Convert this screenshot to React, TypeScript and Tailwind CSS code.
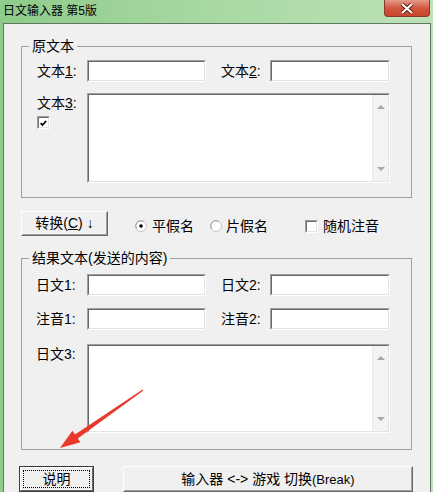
import type { ReactNode } from 'react';

function Sunken({ className = '', children }: { className?: string; children?: ReactNode }) {
  return (
    <div className={`border border-t-[#a0a0a0] border-l-[#a0a0a0] border-b-white border-r-white ${className}`}>
      <div className="flex h-full w-full border border-t-[#696969] border-l-[#696969] border-b-[#e3e3e3] border-r-[#e3e3e3] bg-white">
        {children}
      </div>
    </div>
  );
}

function TextArea({ className = '' }: { className?: string }) {
  return (
    <Sunken className={className}>
      <div className="flex-1" />
      <div className="flex w-[16px] flex-col items-center justify-between border-l border-l-[#e8e8e8] bg-[#f3f3f3] py-[9px]">
        <svg width="8" height="5" viewBox="0 0 8 5">
          <path d="M0 5 L4 1 L8 5 Z" fill="#a8a8a8" />
        </svg>
        <svg width="8" height="5" viewBox="0 0 8 5">
          <path d="M0 0 L8 0 L4 4 Z" fill="#a8a8a8" />
        </svg>
      </div>
    </Sunken>
  );
}

function CheckBox({ checked = false, className = '' }: { checked?: boolean; className?: string }) {
  return (
    <Sunken className={`h-[13px] w-[13px] ${className}`}>
      {checked && (
        <svg width="11" height="11" viewBox="0 0 11 11">
          <path d="M2 5 L4.3 7.5 L8.8 2.5" stroke="#000" strokeWidth="2" fill="none" />
        </svg>
      )}
    </Sunken>
  );
}

function Radio({ checked = false, className = '' }: { checked?: boolean; className?: string }) {
  return (
    <svg width="12" height="12" viewBox="0 0 12 12" className={className}>
      <circle cx="6" cy="6" r="5.5" fill="#fff" stroke="#c4c4c4" />
      <path d="M1.6 8.5 A5 5 0 0 1 8.5 1.6" stroke="#9a9a9a" fill="none" />
      {checked && <circle cx="6" cy="6" r="1.8" fill="#000" />}
    </svg>
  );
}

function Button({ className = '', children }: { className?: string; children: ReactNode }) {
  return (
    <div className={`border border-t-white border-l-white border-b-[#696969] border-r-[#696969] bg-[#f0f0f0] ${className}`}>
      <div className="flex h-full w-full items-center justify-center border border-t-[#f0f0f0] border-l-[#f0f0f0] border-b-[#a0a0a0] border-r-[#a0a0a0]">
        {children}
      </div>
    </div>
  );
}

function Label({ className = '', children }: { className?: string; children: ReactNode }) {
  return <span className={`shrink-0 text-[14px] leading-[20px] ${className}`}>{children}</span>;
}

export default function App() {
  return (
    <div className="relative flex h-[492px] w-[433px] flex-col overflow-hidden bg-gradient-to-r from-[#8fcb8b] via-[#a8d9a3] to-[#bde2b7] font-['Liberation_Sans','Noto_Sans_CJK_SC',sans-serif] text-black">
      {/* Title bar */}
      <div className="flex h-[23px] shrink-0 items-start">
        <span className="mt-[2px] pl-[3px] text-[12px] leading-[18px]">日文输入器 第5版</span>
        <div className="mr-[3px] ml-auto flex h-[17px] w-[46px] items-center justify-center rounded-b-[4px] border border-t-0 border-[#8a3a2c] bg-gradient-to-b from-[#e49a88] via-[#d0583e] to-[#c9452e]">
          <svg width="14" height="11" viewBox="0 0 14 11">
            <path d="M2 1 L12 10 M12 1 L2 10" stroke="#5a1c12" strokeWidth="4" />
            <path d="M2 1 L12 10 M12 1 L2 10" stroke="#fff" strokeWidth="2.2" />
          </svg>
        </div>
      </div>

      {/* Window body */}
      <div className="mr-[2px] ml-[3px] flex-1 border border-[#5e7a5e] bg-[#f0f0f0]">
        <fieldset className="mt-[12px] ml-[17px] w-[391px] border border-[#a0a0a0]">
          <legend className="ml-[7px] px-[3px] text-[14px] leading-[20px]">原文本</legend>
          <div className="pt-[4px] pb-[14px] pl-[15px]">
            <div className="flex h-[22px] items-center">
              <Label className="w-[50px]">
                文本<span className="underline">1</span>:
              </Label>
              <Sunken className="h-[22px] w-[119px]" />
              <Label className="ml-[15px] w-[49px]">
                文本<span className="underline">2</span>:
              </Label>
              <Sunken className="h-[22px] w-[120px]" />
            </div>
            <div className="mt-[11px] flex">
              <div className="flex w-[50px] flex-col">
                <Label>
                  文本<span className="underline">3</span>:
                </Label>
                <CheckBox checked className="mt-[3px]" />
              </div>
              <TextArea className="h-[90px] w-[303px]" />
            </div>
          </div>
        </fieldset>

        <div className="mt-[12px] ml-[17px] flex items-center">
          <Button className="h-[25px] w-[87px]">
            <span className="text-[14px] leading-[20px]">
              转换(<span className="underline">C</span>) ↓
            </span>
          </Button>
          <div className="flex items-center pt-[6px]">
            <Radio checked className="ml-[27px]" />
            <Label className="ml-[5px]">平假名</Label>
            <Radio className="ml-[16px]" />
            <Label className="ml-[4px]">片假名</Label>
            <CheckBox className="ml-[37px]" />
            <Label className="ml-[5px]">随机注音</Label>
          </div>
        </div>

        <fieldset className="mt-[12px] ml-[17px] w-[391px] border border-[#a0a0a0]">
          <legend className="ml-[7px] px-[3px] text-[14px] leading-[20px]">结果文本(发送的内容)</legend>
          <div className="pt-[6px] pb-[16px] pl-[14px]">
            <div className="flex h-[22px] items-center">
              <Label className="w-[51px]">日文1:</Label>
              <Sunken className="h-[22px] w-[119px]" />
              <Label className="ml-[15px] w-[49px]">日文2:</Label>
              <Sunken className="h-[22px] w-[120px]" />
            </div>
            <div className="mt-[12px] flex h-[22px] items-center">
              <Label className="w-[51px]">注音1:</Label>
              <Sunken className="h-[22px] w-[119px]" />
              <Label className="ml-[15px] w-[49px]">注音2:</Label>
              <Sunken className="h-[22px] w-[120px]" />
            </div>
            <div className="mt-[14px] flex">
              <Label className="w-[51px]">日文3:</Label>
              <TextArea className="h-[89px] w-[303px]" />
            </div>
          </div>
        </fieldset>

        <div className="mt-[16px] ml-[15px] flex">
          <div className="h-[26px] w-[75px] border border-[#3c3c3c] bg-[#f0f0f0]">
            <div className="h-full w-full border border-t-white border-l-white border-b-[#696969] border-r-[#696969] p-[2px]">
              <div className="flex h-full w-full items-center justify-center border border-dotted border-black">
                <span className="text-[14px] leading-[18px]">说明</span>
              </div>
            </div>
          </div>
          <Button className="ml-[29px] h-[26px] w-[290px]">
            <span className="text-[14px] leading-[20px]">
              输入器 &lt;-&gt; 游戏 切换<span className="text-[13px]">(Break)</span>
            </span>
          </Button>
        </div>
      </div>

      {/* Annotation arrow */}
      <svg className="pointer-events-none absolute inset-0" width="433" height="492" viewBox="0 0 433 492">
        <path
          d="M60 448 L80.4 442.2 L77.8 438.5 L143.4 390.6 L142.6 389.4 L75 434.5 L72.4 430.8 Z"
          fill="#e8392b"
        />
      </svg>
    </div>
  );
}
